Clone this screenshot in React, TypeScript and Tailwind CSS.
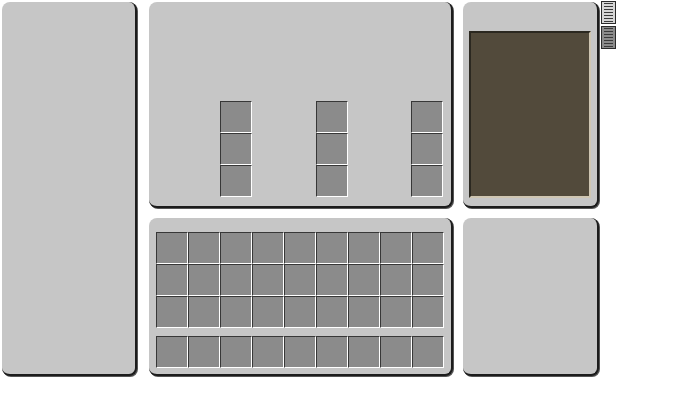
import React from "react";

const panel =
  "bg-[#c6c6c6] rounded-lg border-r-2 border-b-2 border-[#1c1c1c] shadow-[1px_1px_0_#555]";

function Slot() {
  return (
    <div className="w-8 h-8 bg-[#8b8b8b] border-t border-l border-[#373737] border-r border-b border-r-white border-b-white" />
  );
}

function SlotColumn() {
  return (
    <div className="flex flex-col">
      <Slot />
      <Slot />
      <Slot />
    </div>
  );
}

function SlotRow() {
  return (
    <div className="flex">
      {Array.from({ length: 9 }).map((_, i) => (
        <Slot key={i} />
      ))}
    </div>
  );
}

function ScrollTab({ dark }: { dark?: boolean }) {
  return (
    <div
      className={`w-[15px] h-[23px] border border-[#2a2a2a] flex flex-col justify-center gap-[2px] px-[2px] ${
        dark ? "bg-[#8b8b8b]" : "bg-[#d6d6d6]"
      }`}
    >
      {Array.from({ length: 7 }).map((_, i) => (
        <div key={i} className="h-px bg-[#3a3a3a]" />
      ))}
    </div>
  );
}

export default function App() {
  return (
    <div className="w-[700px] h-[400px] bg-white flex pl-[2px] pt-[2px] font-['Liberation_Sans',sans-serif]">
      <div className={`${panel} w-[135px] h-[374px]`} />

      <div className="ml-[12px] w-[304px] flex flex-col gap-[10px]">
        <div className={`${panel} h-[206px] pl-[71px] pt-[99px] flex`}>
          <SlotColumn />
          <div className="ml-[64px]">
            <SlotColumn />
          </div>
          <div className="ml-[63px]">
            <SlotColumn />
          </div>
        </div>
        <div className={`${panel} h-[158px] pl-[7px] pt-[14px] flex flex-col`}>
          <SlotRow />
          <SlotRow />
          <SlotRow />
          <div className="mt-2">
            <SlotRow />
          </div>
        </div>
      </div>

      <div className="ml-[10px] w-[136px] flex flex-col gap-[10px]">
        <div className={`${panel} h-[206px] pl-[6px] pt-[29px]`}>
          <div className="w-[122px] h-[167px] bg-[#524a3b] border-t-2 border-l-2 border-[#2b2820] border-r-2 border-b-2 border-r-[#cfc6b2] border-b-[#cfc6b2]" />
        </div>
        <div className={`${panel} h-[158px]`} />
      </div>

      <div className="ml-[2px] -mt-[1px] flex flex-col gap-[2px]">
        <ScrollTab />
        <ScrollTab dark />
      </div>
    </div>
  );
}
